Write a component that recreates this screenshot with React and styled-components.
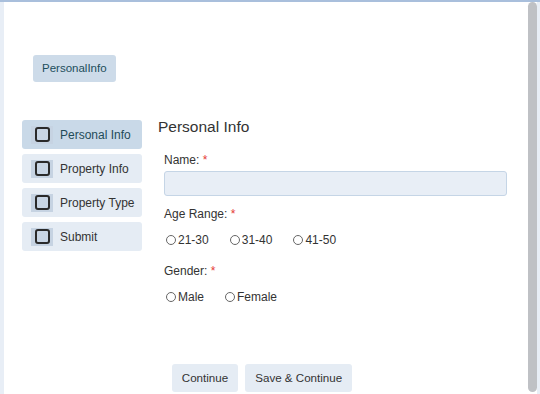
import React, { useState } from "react";
import styled, { createGlobalStyle } from "styled-components";

const GlobalStyle = createGlobalStyle`
  html, body {
    margin: 0;
    padding: 0;
    background: #e8eef6;
    overflow: hidden;
  }
  body {
    font-family: "Liberation Sans", Arial, sans-serif;
    color: #333;
  }
`;

const Page = styled.div`
  border-top: 2px solid #a9bfdc;
  height: 392px;
  display: flex;
  padding: 0 3px 0 4px;
`;

const Frame = styled.div`
  flex: 1;
  background: #fff;
  overflow: hidden;
`;

const ScrollTrack = styled.div`
  width: 9px;
  background: #fff;
  padding-bottom: 2px;
  display: flex;
`;

const ScrollThumb = styled.div`
  flex: 1;
  background: #bfc1c5;
  border-radius: 5px;
`;

const Header = styled.div`
  padding: 53px 0 0 29px;
  display: flex;
`;

const Chip = styled.div`
  background: #cddbe9;
  color: #1c4e5c;
  font-size: 11.5px;
  line-height: 15px;
  padding: 6px 9px;
  border-radius: 3px;
`;

const Body = styled.div`
  display: flex;
  align-items: flex-start;
  gap: 16px;
  margin-top: 36px;
  padding: 0 21px 0 18px;
`;

const Sidebar = styled.div`
  width: 120px;
  padding-top: 2px;
  display: flex;
  flex-direction: column;
  gap: 5px;
`;

const Step = styled.div`
  height: 29px;
  display: flex;
  align-items: center;
  gap: 7px;
  padding-left: 9px;
  border-radius: 3px;
  font-size: 12px;
  white-space: nowrap;
  background: ${(p) => (p.$active ? "#c9d9e8" : "#e5ecf4")};
  color: ${(p) => (p.$active ? "#1f4b58" : "#333")};
`;

const CheckWrap = styled.span`
  width: 22px;
  height: 18px;
  background: #c6d3e2;
  display: flex;
  align-items: center;
  justify-content: center;
`;

const CheckBox = styled.span`
  width: 11px;
  height: 11px;
  border: 2px solid #2a2a2a;
  border-radius: 3px;
  background: #c8d5e4;
`;

const Main = styled.div`
  flex: 1;
`;

const Title = styled.h2`
  margin: 0 0 17px;
  font-size: 15.5px;
  font-weight: normal;
  color: #333;
`;

const Fields = styled.div`
  padding-left: 6px;
  display: flex;
  flex-direction: column;
  gap: 11px;
`;

const Field = styled.div`
  display: flex;
  flex-direction: column;
`;

const Label = styled.label`
  font-size: 12px;
  line-height: 14px;
  color: #333;

  span {
    color: #e53935;
  }
`;

const TextInput = styled.input`
  margin-top: 4px;
  height: 25px;
  box-sizing: border-box;
  background: #e8eef6;
  border: 1px solid #c5d5e6;
  border-radius: 3px;
  outline: none;
  font-family: inherit;
`;

const RadioRow = styled.div`
  display: flex;
  gap: 21px;
  margin-top: 12px;
  min-height: 20px;
  padding-left: 2px;
`;

const RadioOption = styled.label`
  display: flex;
  align-items: center;
  gap: 2px;
  height: 14px;
  font-size: 12px;
  color: #333;
  cursor: pointer;
`;

const Circle = styled.span`
  width: 8px;
  height: 8px;
  border: 1px solid #666;
  border-radius: 50%;
  background: ${(p) => (p.$on ? "#666" : "#fff")};
`;

const Footer = styled.div`
  display: flex;
  justify-content: center;
  gap: 7px;
  margin-top: 54px;
  padding: 0 8px 4px 0;
`;

const Button = styled.button`
  border: none;
  background: #e5ecf4;
  color: #333;
  font-family: inherit;
  font-size: 11.6px;
  line-height: 14px;
  padding: 7px 10px;
  border-radius: 3px;
`;

const steps = ["Personal Info", "Property Info", "Property Type", "Submit"];

const Radios = ({ options, value, onChange }) => (
  <RadioRow>
    {options.map((o) => (
      <RadioOption key={o} onClick={() => onChange(o)}>
        <Circle $on={value === o} />
        {o}
      </RadioOption>
    ))}
  </RadioRow>
);

export default function App() {
  const [age, setAge] = useState(null);
  const [gender, setGender] = useState(null);

  return (
    <>
      <GlobalStyle />
      <Page>
        <Frame>
          <Header>
            <Chip>PersonalInfo</Chip>
          </Header>
          <Body>
            <Sidebar>
              {steps.map((s, i) => (
                <Step key={s} $active={i === 0}>
                  <CheckWrap>
                    <CheckBox />
                  </CheckWrap>
                  {s}
                </Step>
              ))}
            </Sidebar>
            <Main>
              <Title>Personal Info</Title>
              <Fields>
                <Field>
                  <Label>
                    Name: <span>*</span>
                  </Label>
                  <TextInput type="text" />
                </Field>
                <Field>
                  <Label>
                    Age Range: <span>*</span>
                  </Label>
                  <Radios options={["21-30", "31-40", "41-50"]} value={age} onChange={setAge} />
                </Field>
                <Field>
                  <Label>
                    Gender: <span>*</span>
                  </Label>
                  <Radios options={["Male", "Female"]} value={gender} onChange={setGender} />
                </Field>
              </Fields>
            </Main>
          </Body>
          <Footer>
            <Button>Continue</Button>
            <Button>Save &amp; Continue</Button>
          </Footer>
        </Frame>
        <ScrollTrack>
          <ScrollThumb />
        </ScrollTrack>
      </Page>
    </>
  );
}
